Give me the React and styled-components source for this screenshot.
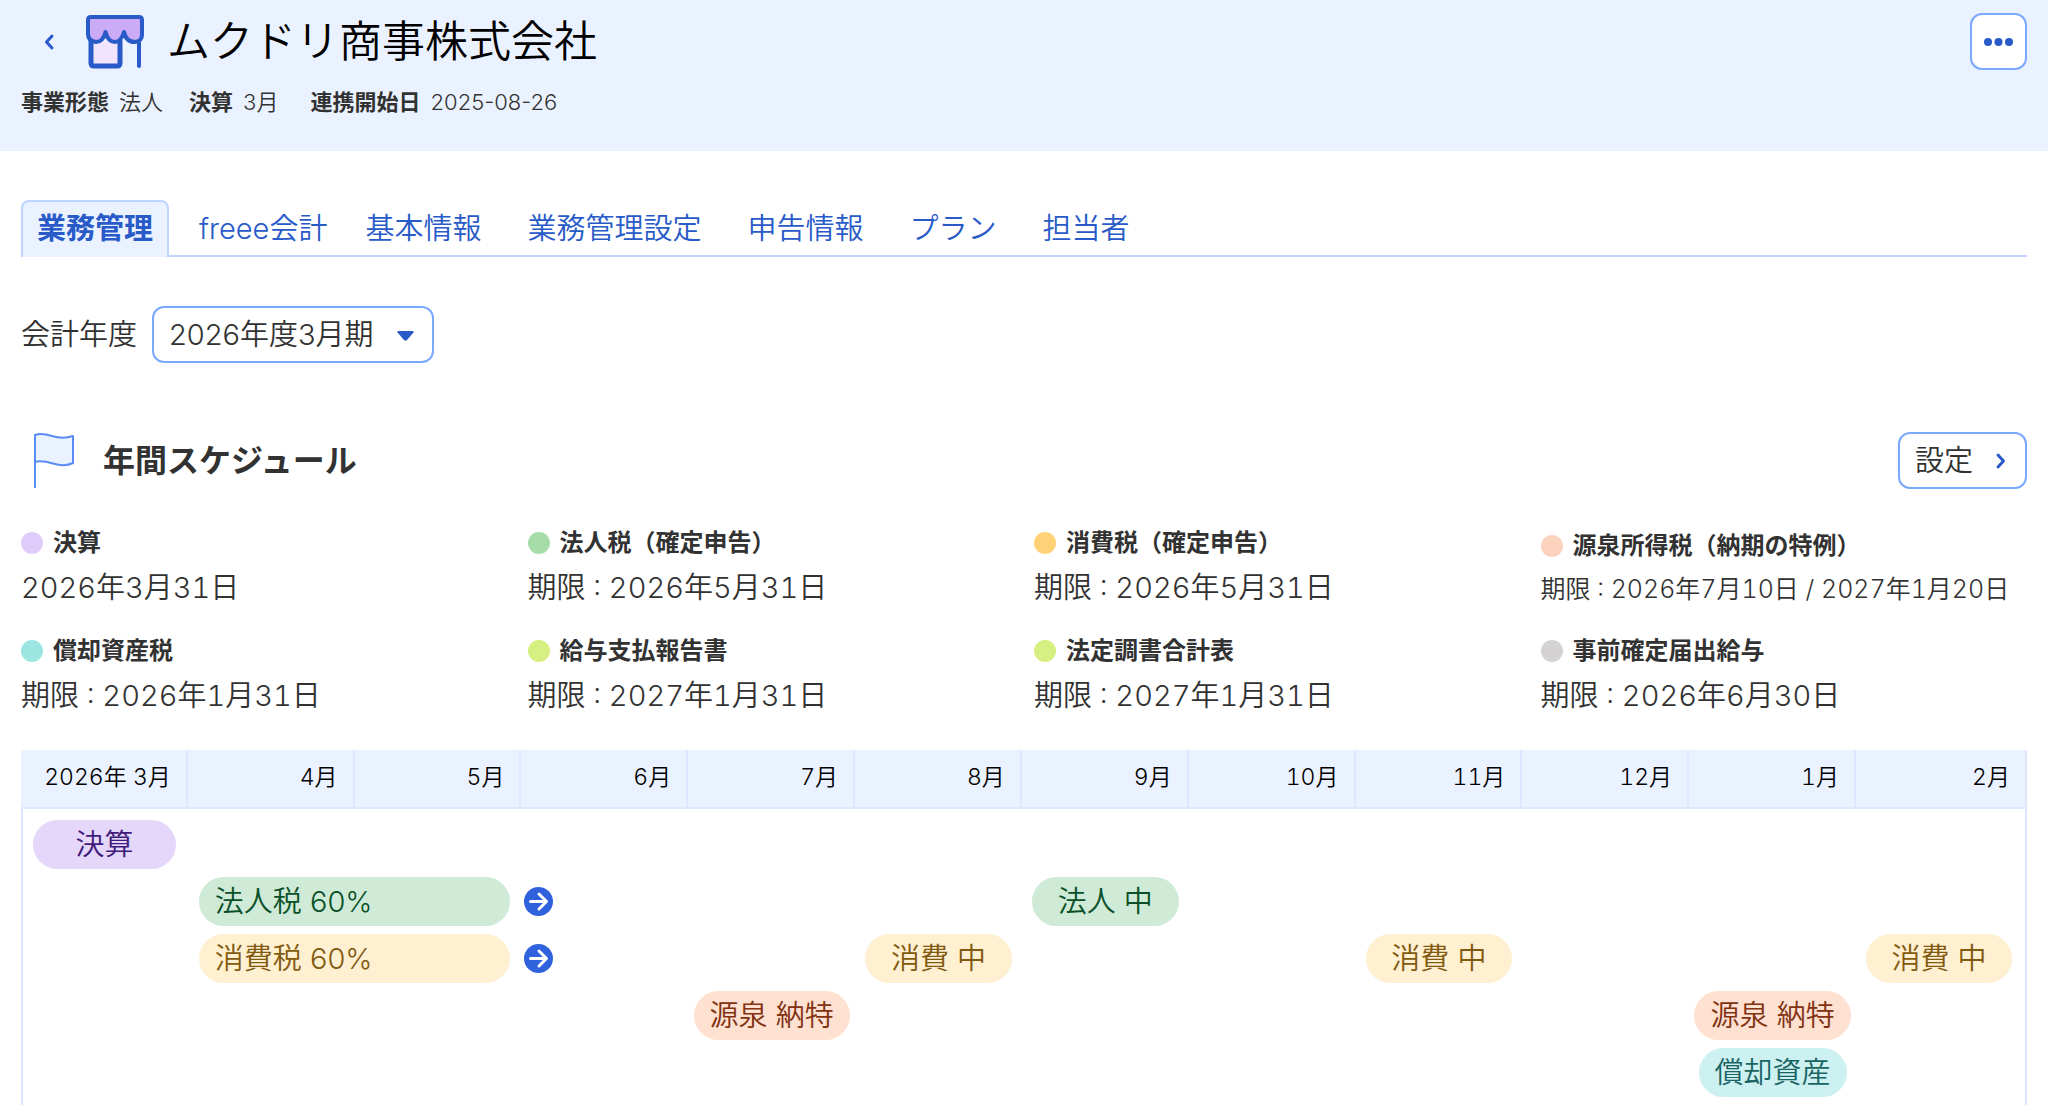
import React, { useState } from 'react';
import styled, { createGlobalStyle } from 'styled-components';

const GlobalStyle = createGlobalStyle`
  :root {
    --c-text: #323232;
    --c-primary: #285ac8;
    --c-outline: #7ba9ff;
    --c-line: #bed6ff;
    --c-grid: #dce8ff;
    --c-pale: #ebf2ff;
    --fs-title: 43px;
    --fs-heading: 32px;
    --fs-text: 29px;
    --fs-date: 25px;
    --fs-label: 24px;
    --fs-month: 23px;
    --fs-small: 22px;
    --fw-normal: 350;
    --gutter: 21px;
  }

  *, *::before, *::after {
    box-sizing: border-box;
  }

  body {
    margin: 0;
    background: #fff;
    color: var(--c-text);
    font-family: Inter, 'Noto Sans CJK JP', sans-serif;
    font-size: var(--fs-text);
    font-weight: var(--fw-normal);
    line-height: 40px;
  }
`

const Page = styled.div`
  height: 100vh;
  overflow: hidden;
`

const Header = styled.header`
  display: flex;
  justify-content: space-between;
  align-items: flex-start;
  height: 151px;
  padding: 13px var(--gutter) 0;
  background: var(--c-pale);
`

const TitleRow = styled.div`
  display: flex;
  align-items: center;
  height: 57px;
`

const BackLink = styled.a`
  display: flex;
  justify-content: center;
  width: 56px;
  color: var(--c-primary);
`

const CompanyName = styled.h1`
  margin: 0 0 0 22px;
  color: #000;
  font-size: var(--fs-title);
  font-weight: var(--fw-normal);
  line-height: 57px;
`

const StoreSvg = styled.svg`
  margin-left: 8px;
`

const Meta = styled.dl`
  display: flex;
  gap: 26px;
  margin: 16px 0 0;
  font-size: var(--fs-small);
  line-height: 32px;
`

const MetaItem = styled.div`
  display: flex;
  gap: 10px;

  & > dt {
    font-weight: 700;
  }

  & > dd {
    margin: 0;
  }
`

const OutlineButton = styled.button`
  display: flex;
  justify-content: center;
  align-items: center;
  gap: 22px;
  min-width: 57px;
  height: 57px;
  margin: 0;
  padding: 0 ${props => props.$icon ? '0' : '18px 0 15px'};
  background: #fff;
  color: var(--c-text);
  border: 2px solid var(--c-outline);
  border-radius: 12px;
  font: inherit;
  cursor: pointer;
`

const Main = styled.main`
  padding: 49px var(--gutter) 0;
`

const TabBar = styled.nav`
  display: flex;
  gap: 14px;
  height: 57px;
  border-bottom: 2px solid var(--c-line);
`

const Tab = styled.a`
  height: 57px;
  padding: 0 ${props => props.$tight ? '6px' : '14px'} 0 14px;
  border: 2px solid ${props => props.$active ? 'var(--c-line)' : 'transparent'};
  border-bottom: none;
  border-radius: 8px 8px 0 0;
  background: ${props => props.$active ? 'var(--c-pale)' : 'transparent'};
  color: var(--c-primary);
  font-weight: ${props => props.$active ? 700 : 'var(--fw-normal)'};
  line-height: 54px;
  text-decoration: none;
  white-space: nowrap;
`

const Field = styled.div`
  display: flex;
  align-items: center;
  gap: 15px;
  margin-top: 49px;
`

const SelectBox = styled.div`
  position: relative;
  display: flex;

  & > svg {
    position: absolute;
    top: 25px;
    right: 20px;
    pointer-events: none;
  }
`

const Select = styled.select`
  appearance: none;
  width: 282px;
  height: 57px;
  padding: 0 48px 0 15px;
  background: #fff;
  border: 2px solid var(--c-outline);
  border-radius: 12px;
  color: var(--c-text);
  font: inherit;
`

const SectionHead = styled.div`
  display: flex;
  align-items: center;
  margin-top: 69px;

  & > h2 {
    flex: 1;
    margin: 0 0 0 29px;
    font-size: var(--fs-heading);
    font-weight: 700;
  }
`

const FlagSvg = styled.svg`
  margin-left: 12px;
`

const Legend = styled.ul`
  display: grid;
  grid-template-columns: repeat(4, minmax(0, 1fr));
  align-items: end;
  gap: 25px 20px;
  margin: 36px 0 0;
  padding: 0;
  list-style: none;
  font-variant-numeric: tabular-nums;
  white-space: nowrap;
`

const LegendLabel = styled.div`
  display: flex;
  align-items: center;
  gap: 10px;
  margin-bottom: 7px;
  font-size: var(--fs-label);
  font-weight: 700;
  line-height: 36px;
`

const Dot = styled.span`
  width: 22px;
  height: 22px;
  border-radius: 50%;
  background: ${props => props.$color};
`

const LegendDate = styled.div`
  font-size: ${props => props.$small ? 'var(--fs-date)' : 'var(--fs-text)'};
  line-height: ${props => props.$small ? '37px' : '40px'};
`

const Timeline = styled.table`
  width: 100%;
  margin-top: 34px;
  border-collapse: separate;
  border-spacing: 0;
  table-layout: fixed;

  & th {
    height: 59px;
    padding: 0 15px 3px 0;
    background: var(--c-pale);
    border-right: 2px solid var(--c-grid);
    border-bottom: 2px solid var(--c-grid);
    color: #000;
    font-size: var(--fs-month);
    font-weight: var(--fw-normal);
    font-variant-numeric: tabular-nums;
    text-align: right;
    white-space: nowrap;
  }

  & th:last-child {
    width: 171px;
  }

  & td {
    height: 57px;
    padding: 8px 0 0;
  }

  & tbody tr:first-child td {
    height: 60px;
    padding-top: 11px;
  }

  & td:first-child {
    padding-right: 2px;
    border-left: 2px solid var(--c-grid);
  }

  & td:last-child {
    padding-right: 3px;
    border-right: 2px solid var(--c-grid);
  }
`

const Slot = styled.div`
  display: flex;
  justify-content: ${props => props.$start ? 'flex-start' : 'center'};
  align-items: center;
  height: 49px;
  padding-left: ${props => props.$start ? '3px' : '0'};
`

const Pill = styled.div`
  flex: none;
  min-width: calc(100% - ${props => props.$wide ? '22px' : '20px'});
  padding: 0 16px;
  border-radius: 25px;
  background: ${props => tones[props.$tone].bg};
  color: ${props => tones[props.$tone].text};
  line-height: 49px;
  text-align: ${props => props.$wide ? 'left' : 'center'};
  white-space: nowrap;
`

const ArrowLink = styled.a`
  display: flex;
`

const tones = {
  purple: { bg: '#e5d7fa', text: '#3f1c7a' },
  green: { bg: '#cfebd7', text: '#0a5028' },
  yellow: { bg: '#fff0d2', text: '#825a0f' },
  orange: { bg: '#ffe1d2', text: '#823210' },
  teal: { bg: '#cdf0f0', text: '#196464' },
}

const tabs = ['業務管理', 'freee会計', '基本情報', '業務管理設定', '申告情報', 'プラン', '担当者']

const legend = [
  { label: '決算', date: '2026年3月31日', color: '#dfccfa' },
  { label: '法人税（確定申告）', date: '期限 : 2026年5月31日', color: '#a5dcaa' },
  { label: '消費税（確定申告）', date: '期限 : 2026年5月31日', color: '#ffd278' },
  { label: '源泉所得税（納期の特例）', date: '期限 : 2026年7月10日 / 2027年1月20日', color: '#fad2be', small: true },
  { label: '償却資産税', date: '期限 : 2026年1月31日', color: '#9be6e1' },
  { label: '給与支払報告書', date: '期限 : 2027年1月31日', color: '#d7f082' },
  { label: '法定調書合計表', date: '期限 : 2027年1月31日', color: '#d7f082' },
  { label: '事前確定届出給与', date: '期限 : 2026年6月30日', color: '#d5d2d3' },
]

const months = ['2026年 3月', '4月', '5月', '6月', '7月', '8月', '9月', '10月', '11月', '12月', '1月', '2月']

// col is the index in months, span the number of months covered
const rows = [
  [{ col: 0, text: '決算', tone: 'purple' }],
  [
    { col: 1, span: 2, text: '法人税 60%', tone: 'green' },
    { col: 3, arrow: '法人税の申告へ' },
    { col: 6, text: '法人 中', tone: 'green' },
  ],
  [
    { col: 1, span: 2, text: '消費税 60%', tone: 'yellow' },
    { col: 3, arrow: '消費税の申告へ' },
    { col: 5, text: '消費 中', tone: 'yellow' },
    { col: 8, text: '消費 中', tone: 'yellow' },
    { col: 11, text: '消費 中', tone: 'yellow' },
  ],
  [
    { col: 4, text: '源泉 納特', tone: 'orange' },
    { col: 10, text: '源泉 納特', tone: 'orange' },
  ],
  [{ col: 10, text: '償却資産', tone: 'teal' }],
  [],
]

const StoreIcon = () => (
  <StoreSvg width="60" height="55" viewBox="0 0 60 55" fill="none" stroke="#285ac8" strokeWidth="5" strokeLinejoin="round" strokeLinecap="round" aria-hidden="true">
    <path d="M6 27V49q0 3 3 3H32q3 0 3-3V27" fill="#f0e4ff" />
    <path d="M54 29V52" strokeWidth="4" />
    <path d="M6 3H54q3 0 3 3V21q0 6-7 7-9 0-11-10-3 10-9 10-7 0-9.500-10-2.500 10-9.500 10Q3 27 3 20V6q0-3 3-3Z" fill="#cbabf5" strokeWidth="4" />
  </StoreSvg>
)

const FlagIcon = () => (
  <FlagSvg width="41" height="57" viewBox="0 0 41 57" fill="none" stroke="#5a8cf5" strokeWidth="2" strokeLinejoin="round" aria-hidden="true">
    <path d="M2 3Q8 .5 19 4T40 4V31Q32 35 20 31.500T2 30Z" fill="#ebf2ff" />
    <path d="M2 3V56" />
  </FlagSvg>
)

const Chevron = ({ left }) => (
  <svg width="12" height="18" viewBox="0 0 12 18" fill="none" stroke="#285ac8" strokeWidth="3" strokeLinecap="round" strokeLinejoin="round" aria-hidden="true">
    <path d={left ? 'M9 3 3.500 9 9 15' : 'M3 3 8.500 9 3 15'} />
  </svg>
)

const ArrowIcon = () => (
  <svg width="29" height="29" viewBox="0 0 29 29" fill="none" aria-hidden="true">
    <circle cx="14.500" cy="14.500" r="14.500" fill="#2f62dc" />
    <path d="M6.500 14.500H22M15 7l7.500 7.500L15 22" stroke="#fff" strokeWidth="3" strokeLinecap="round" strokeLinejoin="round" />
  </svg>
)

const TimelineRow = ({ items }) => {
  const cells = []
  let col = 0
  while (col < months.length) {
    const item = items.find(i => i.col === col)
    const span = item?.span || 1
    cells.push(
      <td key={col} colSpan={span}>
        {item && (
          <Slot $start={!!item.arrow}>
            {item.arrow
              ? <ArrowLink href="#" aria-label={item.arrow}><ArrowIcon /></ArrowLink>
              : <Pill $tone={item.tone} $wide={span > 1}>{item.text}</Pill>}
          </Slot>
        )}
      </td>
    )
    col += span
  }
  return <tr>{cells}</tr>
}

export default function App() {
  const [year, setYear] = useState('2026-03')

  return (
    <Page lang="ja">
      <GlobalStyle />
      <Header>
        <div>
          <TitleRow>
            <BackLink href="#" aria-label="戻る"><Chevron left /></BackLink>
            <StoreIcon />
            <CompanyName>ムクドリ商事株式会社</CompanyName>
          </TitleRow>
          <Meta>
            <MetaItem><dt>事業形態</dt><dd>法人</dd></MetaItem>
            <MetaItem><dt>決算</dt><dd>3月&nbsp;</dd></MetaItem>
            <MetaItem><dt>連携開始日</dt><dd>2025-08-26</dd></MetaItem>
          </Meta>
        </div>
        <OutlineButton type="button" $icon aria-label="メニュー">
          <svg width="29" height="8" viewBox="0 0 29 8" fill="#285ac8" aria-hidden="true">
            <circle cx="4" cy="4" r="4" />
            <circle cx="14.500" cy="4" r="4" />
            <circle cx="25" cy="4" r="4" />
          </svg>
        </OutlineButton>
      </Header>
      <Main>
        <TabBar>
          {tabs.map((tab, i) => (
            <Tab key={tab} href="#" $active={i === 0} $tight={i === 1}>{tab}</Tab>
          ))}
        </TabBar>
        <Field>
          <label htmlFor="year">会計年度</label>
          <SelectBox>
            <Select id="year" value={year} onChange={e => setYear(e.target.value)}>
              <option value="2026-03">2026年度3月期</option>
            </Select>
            <svg width="17" height="10" viewBox="0 0 17 10" fill="#285ac8" aria-hidden="true">
              <path d="M1.500 0h14q1.500 0 1 1.500L10 9q-1.500 1.500-3 0L.5 1.500Q0 0 1.500 0Z" />
            </svg>
          </SelectBox>
        </Field>
        <SectionHead>
          <FlagIcon />
          <h2>年間スケジュール</h2>
          <OutlineButton type="button">設定 <Chevron /></OutlineButton>
        </SectionHead>
        <Legend>
          {legend.map(item => (
            <li key={item.label}>
              <LegendLabel><Dot $color={item.color} />{item.label}</LegendLabel>
              <LegendDate $small={item.small}>{item.date}</LegendDate>
            </li>
          ))}
        </Legend>
        <Timeline>
          <thead>
            <tr>{months.map(month => <th key={month} scope="col">{month}</th>)}</tr>
          </thead>
          <tbody>
            {rows.map((items, i) => <TimelineRow key={i} items={items} />)}
          </tbody>
        </Timeline>
      </Main>
    </Page>
  )
}
